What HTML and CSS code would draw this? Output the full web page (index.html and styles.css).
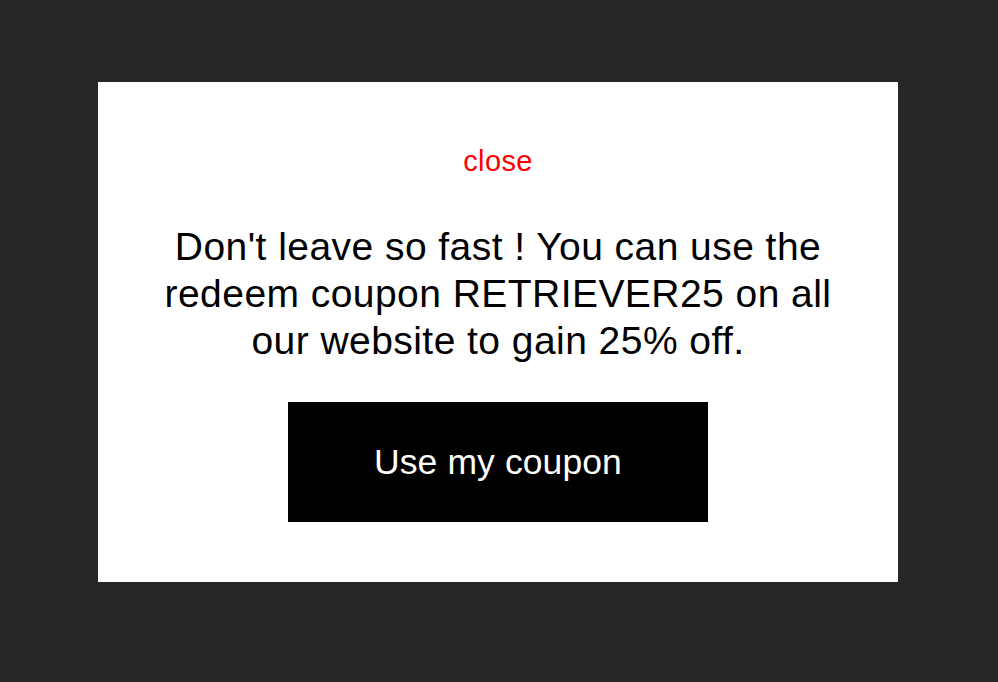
FILE: index.html
```html
<!DOCTYPE html>
<html lang="en">
<head>
<meta charset="utf-8">
<title>Coupon</title>
<link rel="stylesheet" href="styles.css">
</head>
<body>
<div class="modal">
  <a class="close" href="#">close</a>
  <p class="message">Don't leave so fast ! You can use the redeem coupon RETRIEVER25 on all our website to gain 25% off.</p>
  <button class="cta" type="button">Use my coupon</button>
</div>
</body>
</html>
```
FILE: styles.css
```css
html, body {
  margin: 0;
  height: 100%;
}
body {
  background: #272727;
  padding: 82px 0 0 98px;
  box-sizing: border-box;
  font-family: "Liberation Sans", Arial, Helvetica, sans-serif;
}
.modal {
  width: 800px;
  height: 500px;
  background: #fff;
  box-sizing: border-box;
  padding: 63px 40px 0;
  display: flex;
  flex-direction: column;
  align-items: center;
}
.close {
  color: #ff0000;
  text-decoration: none;
  font-size: 29px;
  line-height: 32px;
  letter-spacing: 0.35px;
}
.message {
  margin: 46px 0 0;
  color: #000;
  font-size: 39px;
  line-height: 47px;
  letter-spacing: 0.45px;
  text-align: center;
}
.cta {
  margin-top: 38px;
  width: 420px;
  height: 120px;
  border: 0;
  border-radius: 0;
  background: #000;
  color: #fff;
  font-family: inherit;
  font-size: 35.5px;
  letter-spacing: 0.1px;
  padding: 0;
  cursor: pointer;
}
```
